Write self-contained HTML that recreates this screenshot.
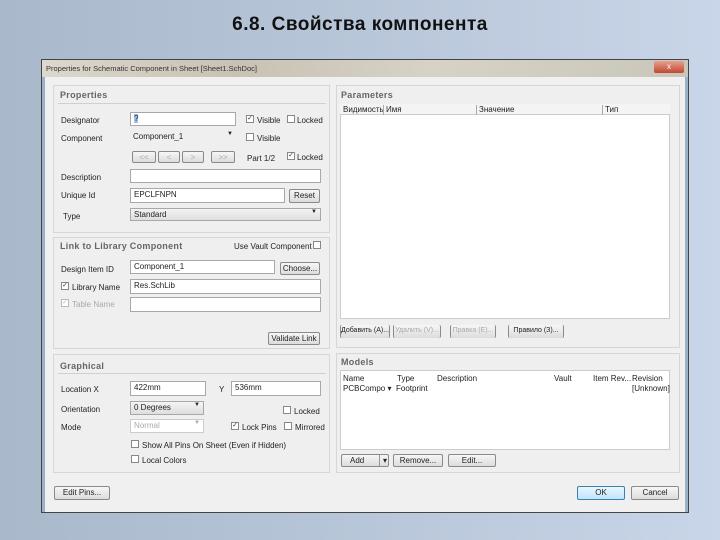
<!DOCTYPE html>
<html><head><meta charset="utf-8"><style>
*{margin:0;padding:0;box-sizing:border-box}
body{width:720px;height:540px;overflow:hidden;position:relative;font-family:"Liberation Sans",sans-serif;background:linear-gradient(90deg,#a9b8cb 0%,#b8c6d9 50%,#c9d5e8 100%)}
.a{position:absolute}
.t{position:absolute;font-size:8px;color:#222;white-space:nowrap}
.g{color:#aaa}
.in{position:absolute;background:#fff;border:1px solid #a8a8a8;font-size:8px;padding:1px 3px;color:#222;white-space:nowrap;overflow:hidden}
.btn{position:absolute;background:linear-gradient(#f6f6f6,#dcdcdc);border:1px solid #8a8a8a;border-radius:2px;font-size:8px;text-align:center;color:#222;line-height:12px;white-space:nowrap;overflow:hidden}
.cb{position:absolute;width:8px;height:8px;border:1px solid #888;background:#fff;font-size:7px;line-height:6px;text-align:center;color:#333}
.pn{position:absolute;border:1px solid #d6d6d6;background:#efefef}
.h{position:absolute;font-size:9px;font-weight:bold;color:#666;letter-spacing:.3px}
.ln{position:absolute;height:1px;background:#d0d0d0}
.dd{position:absolute;right:3px;top:0;font-size:6px}
</style></head><body>
<div class="a" style="left:0;top:14px;width:720px;text-align:center;font-size:19px;font-weight:bold;color:#111;letter-spacing:.5px">6.8. Свойства компонента</div>
<div class="a" style="left:41px;top:59px;width:648px;height:454px;border:1px solid #444;background:#f0f0f0"></div>
<div class="a" style="left:42px;top:60px;width:646px;height:17px;background:linear-gradient(90deg,#ddd8cc,#c8c2b4 30%,#d6d2c6 60%,#c9c6ba)"></div>
<div class="t" style="left:46px;top:64px;font-size:7.5px;color:#333">Properties for Schematic Component in Sheet [Sheet1.SchDoc]</div>
<div class="a" style="left:654px;top:61px;width:30px;height:12px;background:linear-gradient(#e8a090,#c04830);border-radius:2px;color:#fff;font-size:8px;text-align:center;line-height:12px">x</div>
<div class="a" style="left:42px;top:77px;width:646px;height:435px;border-left:3px solid #9cb0c8;border-right:3px solid #9cb0c8;background:#f0f0f0"></div>
<!-- Properties -->
<div class="pn" style="left:53px;top:85px;width:277px;height:148px"></div>
<div class="h" style="left:60px;top:90px">Properties</div><div class="ln" style="left:58px;top:103px;width:268px"></div>
<div class="t" style="left:61px;top:116px">Designator</div>
<div class="in" style="left:130px;top:112px;width:106px;height:14px"><span style="background:#9cc4e8">?</span></div>
<div class="cb" style="left:246px;top:115px">✓</div><div class="t" style="left:257px;top:116px">Visible</div>
<div class="cb" style="left:287px;top:115px"></div><div class="t" style="left:297px;top:116px">Locked</div>
<div class="t" style="left:61px;top:134px">Component</div>
<div class="in" style="left:130px;top:131px;width:106px;height:14px;background:transparent;border:none">Component_1<span class="dd">▼</span></div>
<div class="cb" style="left:246px;top:133px"></div><div class="t" style="left:257px;top:134px">Visible</div>
<div class="btn" style="left:132px;top:151px;width:24px;height:12px;color:#aaa">&lt;&lt;</div>
<div class="btn" style="left:158px;top:151px;width:22px;height:12px;color:#aaa">&lt;</div>
<div class="btn" style="left:182px;top:151px;width:22px;height:12px;color:#aaa">&gt;</div>
<div class="btn" style="left:211px;top:151px;width:24px;height:12px;color:#aaa">&gt;&gt;</div>
<div class="t" style="left:247px;top:154px">Part 1/2</div>
<div class="cb" style="left:287px;top:152px">✓</div><div class="t" style="left:297px;top:153px">Locked</div>
<div class="t" style="left:61px;top:173px">Description</div>
<div class="in" style="left:130px;top:169px;width:191px;height:14px"></div>
<div class="t" style="left:61px;top:191px">Unique Id</div>
<div class="in" style="left:130px;top:188px;width:155px;height:15px">EPCLFNPN</div>
<div class="btn" style="left:289px;top:189px;width:31px;height:14px">Reset</div>
<div class="t" style="left:63px;top:212px">Type</div>
<div class="in" style="left:130px;top:208px;width:191px;height:13px;background:linear-gradient(#f4f4f4,#dedede)">Standard<span class="dd">▼</span></div>
<!-- Link -->
<div class="pn" style="left:53px;top:237px;width:277px;height:112px"></div>
<div class="h" style="left:60px;top:241px">Link to Library Component</div>
<div class="t" style="left:234px;top:242px">Use Vault Component</div><div class="cb" style="left:313px;top:241px"></div>
<div class="t" style="left:61px;top:265px">Design Item ID</div>
<div class="in" style="left:130px;top:260px;width:145px;height:14px">Component_1</div>
<div class="btn" style="left:280px;top:262px;width:40px;height:13px">Choose...</div>
<div class="cb" style="left:61px;top:282px">✓</div><div class="t" style="left:72px;top:283px">Library Name</div>
<div class="in" style="left:130px;top:279px;width:191px;height:15px">Res.SchLib</div>
<div class="cb" style="left:61px;top:299px;border-color:#bbb;color:#bbb">✓</div><div class="t g" style="left:72px;top:300px">Table Name</div>
<div class="in" style="left:130px;top:297px;width:191px;height:15px"></div>
<div class="btn" style="left:268px;top:332px;width:52px;height:13px">Validate Link</div>
<!-- Graphical -->
<div class="pn" style="left:53px;top:354px;width:277px;height:119px"></div>
<div class="h" style="left:60px;top:361px">Graphical</div><div class="ln" style="left:58px;top:373px;width:268px"></div>
<div class="t" style="left:61px;top:385px">Location X</div>
<div class="in" style="left:130px;top:381px;width:76px;height:15px">422mm</div>
<div class="t" style="left:219px;top:385px">Y</div>
<div class="in" style="left:231px;top:381px;width:90px;height:15px">536mm</div>
<div class="t" style="left:61px;top:405px">Orientation</div>
<div class="in" style="left:130px;top:401px;width:74px;height:14px;background:linear-gradient(#f4f4f4,#dedede)">0 Degrees<span class="dd">▼</span></div>
<div class="cb" style="left:283px;top:406px"></div><div class="t" style="left:294px;top:407px">Locked</div>
<div class="t" style="left:61px;top:423px">Mode</div>
<div class="in" style="left:130px;top:419px;width:74px;height:14px;color:#aaa;border-color:#ccc">Normal<span class="dd">▼</span></div>
<div class="cb" style="left:231px;top:422px">✓</div><div class="t" style="left:242px;top:423px">Lock Pins</div>
<div class="cb" style="left:284px;top:422px"></div><div class="t" style="left:295px;top:423px">Mirrored</div>
<div class="cb" style="left:131px;top:440px"></div><div class="t" style="left:142px;top:441px">Show All Pins On Sheet (Even if Hidden)</div>
<div class="cb" style="left:131px;top:455px"></div><div class="t" style="left:142px;top:456px">Local Colors</div>
<!-- Parameters -->
<div class="pn" style="left:336px;top:85px;width:344px;height:263px"></div>
<div class="h" style="left:341px;top:90px">Parameters</div>
<div class="a" style="left:340px;top:104px;width:330px;height:215px;background:#fff;border:1px solid #ccc"></div>
<div class="a" style="left:340px;top:104px;width:330px;height:11px;background:#f4f4f4;border-bottom:1px solid #ccc"></div>
<div class="t" style="left:343px;top:105px">Видимость</div><div class="a" style="left:383px;top:105px;width:1px;height:10px;background:#aaa"></div>
<div class="t" style="left:386px;top:105px">Имя</div><div class="a" style="left:476px;top:105px;width:1px;height:10px;background:#aaa"></div>
<div class="t" style="left:479px;top:105px">Значение</div><div class="a" style="left:602px;top:105px;width:1px;height:10px;background:#aaa"></div>
<div class="t" style="left:605px;top:105px">Тип</div>
<div class="btn" style="left:340px;top:325px;width:50px;height:13px;border-top:none;border-bottom:none;font-size:7px">Добавить (A)...</div>
<div class="btn" style="left:393px;top:325px;width:48px;height:13px;color:#aaa;border-top:none;border-bottom:none;font-size:7px">Удалить (V)...</div>
<div class="btn" style="left:450px;top:325px;width:46px;height:13px;color:#aaa;border-top:none;border-bottom:none;font-size:7px">Правка (E)...</div>
<div class="btn" style="left:508px;top:325px;width:56px;height:13px;border-top:none;border-bottom:none;font-size:7px">Правило (З)...</div>
<!-- Models -->
<div class="pn" style="left:336px;top:353px;width:344px;height:120px"></div>
<div class="h" style="left:341px;top:357px">Models</div>
<div class="a" style="left:340px;top:370px;width:330px;height:80px;background:#fff;border:1px solid #ccc"></div>
<div class="t" style="left:343px;top:374px">Name</div><div class="t" style="left:397px;top:374px">Type</div><div class="t" style="left:437px;top:374px">Description</div><div class="t" style="left:554px;top:374px">Vault</div><div class="t" style="left:593px;top:374px">Item Rev...</div><div class="t" style="left:632px;top:374px">Revision</div>
<div class="t" style="left:343px;top:384px">PCBCompo ▾</div><div class="t" style="left:396px;top:384px">Footprint</div><div class="t" style="left:632px;top:384px">[Unknown]</div>
<div class="btn" style="left:341px;top:454px;width:48px;height:13px;text-align:left;padding-left:8px">Add<span style="position:absolute;left:37px;border-left:1px solid #999;padding-left:3px">▾</span></div>
<div class="btn" style="left:393px;top:454px;width:50px;height:13px">Remove...</div>
<div class="btn" style="left:448px;top:454px;width:48px;height:13px">Edit...</div>
<!-- bottom -->
<div class="btn" style="left:54px;top:486px;width:56px;height:14px">Edit Pins...</div>
<div class="btn" style="left:577px;top:486px;width:48px;height:14px;border-color:#3c7fb1;background:linear-gradient(#eaf6fd,#bee6fd)">OK</div>
<div class="btn" style="left:631px;top:486px;width:48px;height:14px">Cancel</div>
</body></html>
